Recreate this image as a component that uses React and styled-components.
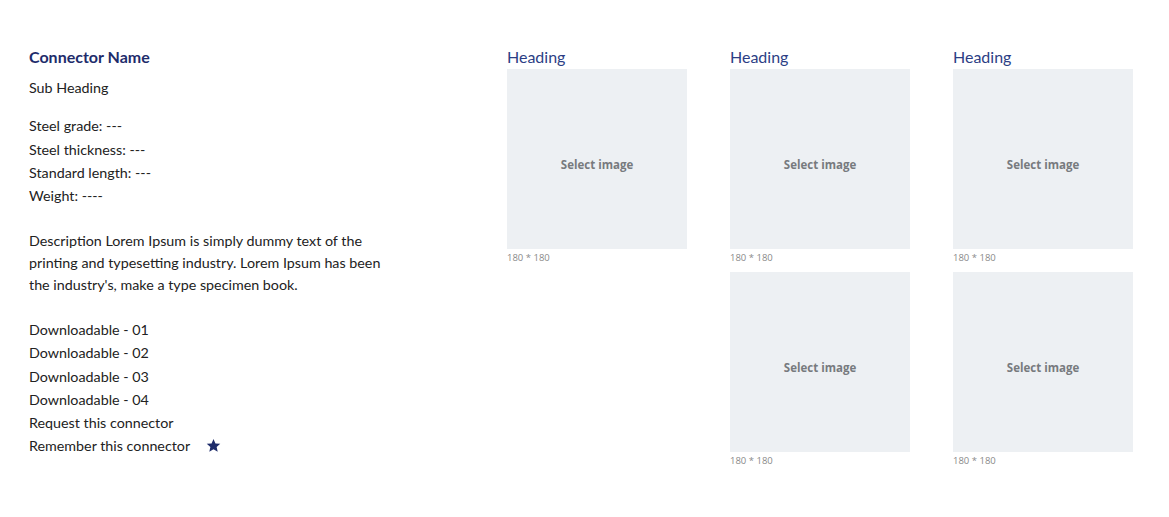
import React from "react";
import styled, { createGlobalStyle } from "styled-components";

const GlobalStyle = createGlobalStyle`
  body {
    margin: 0;
    background: #ffffff;
    font-family: Lato, "Open Sans", sans-serif;
    color: #222;
  }
`

const Page = styled.div`
  display: flex;
  padding: 47px 0 0 29px;
`
const InfoColumn = styled.div`
  width: 478px;
  flex-shrink: 0;
`
const Title = styled.h1`
  margin: 0;
  font-size: 16px;
  line-height: 20px;
  font-weight: 700;
  color: #1e2c6b;
`
const SubHeading = styled.div`
  margin-top: 11px;
  font-size: 14.3px;
  line-height: 20px;
  color: #222;
`
const Block = styled.div`
  margin-top: ${props => props.gap}px;
  width: ${props => props.width || "auto"};
  font-size: 14.3px;
  line-height: ${props => props.lh}px;
  color: #222;
`
const Line = styled.div`
  display: flex;
  align-items: center;
`
const Star = styled.svg`
  width: 15px;
  height: 15px;
  margin-left: 16px;
  fill: #1e2c6b;
`
const Gallery = styled.div`
  display: flex;
  gap: 43px;
  align-items: flex-start;
`
const GalleryColumn = styled.div`
  display: flex;
  flex-direction: column;
  width: 180px;
`
const Heading = styled.div`
  font-size: 16px;
  line-height: 20px;
  color: #2c3e85;
  margin-bottom: 2px;
`
const Tile = styled.div`
  display: flex;
  flex-direction: column;
`
const ImageBox = styled.div`
  width: 180px;
  height: 180px;
  padding-top: 10px;
  box-sizing: border-box;
  background: #edf0f3;
  display: flex;
  align-items: center;
  justify-content: center;
  font-family: "Open Sans", sans-serif;
  font-weight: 700;
  font-size: 11.5px;
  color: #777a7e;
`
const Caption = styled.div`
  height: 23px;
  padding-top: 3px;
  box-sizing: border-box;
  font-family: "Open Sans", sans-serif;
  font-size: 9.5px;
  line-height: 12px;
  color: #8a8a8a;
`

const specs = ["Steel grade: ---", "Steel thickness: ---", "Standard length: ---", "Weight: ----"];
const links = ["Downloadable - 01", "Downloadable - 02", "Downloadable - 03", "Downloadable - 04", "Request this connector"];
const columns = [1, 2, 2];

function ImageTile() {
  return (
    <Tile>
      <ImageBox>Select image</ImageBox>
      <Caption>180 * 180</Caption>
    </Tile>
  )
}

export default function App() {
  return (
    <>
      <GlobalStyle />
      <Page>
        <InfoColumn>
          <Title>Connector Name</Title>
          <SubHeading>Sub Heading</SubHeading>
          <Block gap={16.3} lh={23.3}>
            {specs.map(s => <Line key={s}>{s}</Line>)}
          </Block>
          <Block gap={22.4} lh={22} width="360px">
            Description Lorem Ipsum is simply dummy text of the printing and typesetting industry. Lorem Ipsum has been the industry's, make a type specimen book.
          </Block>
          <Block gap={22.4} lh={23.2}>
            {links.map(s => <Line key={s}>{s}</Line>)}
            <Line>
              Remember this connector
              <Star viewBox="0 0 24 24">
                <path d="M12 1.5l3.1 7.1 7.7.7-5.8 5.1 1.7 7.6L12 18l-6.7 4 1.7-7.6-5.8-5.1 7.7-.7z" />
              </Star>
            </Line>
          </Block>
        </InfoColumn>
        <Gallery>
          {columns.map((count, i) => (
            <GalleryColumn key={i}>
              <Heading>Heading</Heading>
              {Array.from({ length: count }).map((_, j) => <ImageTile key={j} />)}
            </GalleryColumn>
          ))}
        </Gallery>
      </Page>
    </>
  )
}
